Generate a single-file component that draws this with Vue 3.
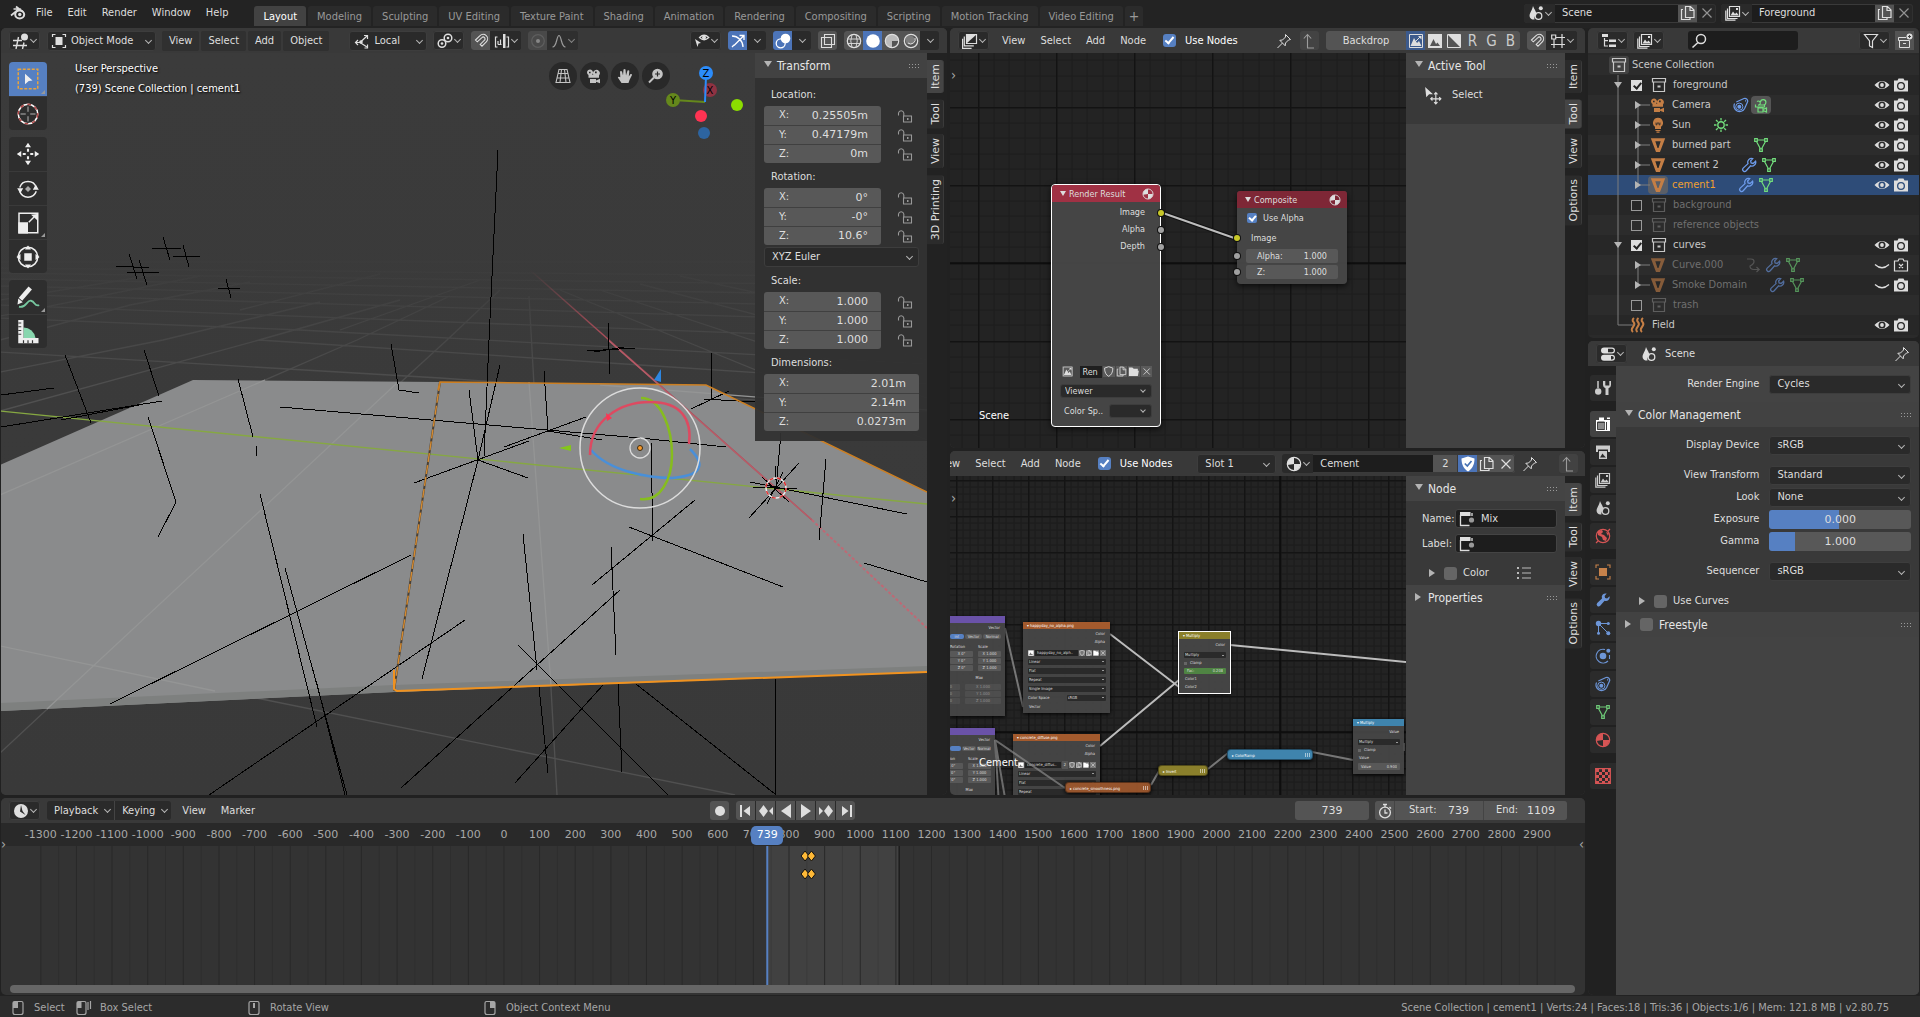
<script setup>
import { h } from 'vue'

const s = (d, w = 1.2, extra = '') => `<path d="${d}" fill="none" stroke="currentColor" stroke-width="${w}" ${extra}/>`
const f = (d, extra = '') => `<path d="${d}" fill="currentColor" ${extra}/>`
const wrench = 'M14.6 4.2a3.8 3.8 0 0 1-5 4.6L5.2 13.800a1.900 1.900 0 0 1-3-2.700L7 6.600a3.800 3.800 0 0 1 4.700-5L9.600 4l.5 2 2 .5z'
const imageStack = s('M4.500 1.500h10v10h-10zM2.500 3.500v10h10M.8 5.500v9.700h9.700') + f('M5.500 10.500l2.500-4 2 2.500 1.500-1.500 2.500 3zM11 3h2v2h-2z')
const mesh = s('M3.500 4.500L7.400 11.800M12.500 4.500L8.600 11.800M4.500 3h7') + s('M1.700 1.700h2.600v2.600H1.700zM11.700 1.700h2.600v2.600h-2.600zM6.700 11.800h2.600v2.600H6.700z', 1.2)
const scene = f('M5 1C6 4 8.500 6.500 8.500 10A4 4 0 0 0 6.500 14.500C2 15 .8 11 2 8.500 3 6 4.500 4 5 1z') + '<circle cx="10.500" cy="11" r="3.300" fill="none" stroke="currentColor" stroke-width="1.300"/><circle cx="12.800" cy="3.200" r="2" fill="currentColor"/>'
const magnet = s('M2.500 7L7 2.700a4.400 4.400 0 0 1 6.300 6.200L9 13.200l-1.800-1.800 4.300-4.200a1.800 1.800 0 0 0-2.600-2.600L4.300 8.800z', 1.100)
const movie = f('M1 4.500a3 3 0 1 1 5 2.200h1.300A3.400 3.400 0 1 1 13 7.500v2.300H2.500V7A3 3 0 0 1 1 4.500zM4 11h6v1.500l4-1.800v4.600l-4-1.500V15H4zM3 3.800v1.400h1.600V3.800zM9 3.500v1.700h1.700V3.500z', 'fill-rule="evenodd"')
const sphere = '<circle cx="8" cy="8" r="6.700" fill="none" stroke="currentColor" stroke-width="1.200"/>'
const constraint = '<circle cx="6.300" cy="9.700" r="2" fill="currentColor"/><circle cx="6.300" cy="9.700" r="3.600" fill="none" stroke="currentColor"/>' + s('M1.600 6.500a5.500 5.500 0 1 0 10 5L14.700 4.500A2.800 2.800 0 0 0 11 1.500L3.300 5M12 3.800h1.200', 1.200)
const photo = f('M1 3.500h3.500L5.500 1.500h5l1 2H15V14.500H1zM8 5a4 4 0 1 0 0 8 4 4 0 0 0 0-8zM8 6.300a2.700 2.700 0 1 1 0 5.400 2.700 2.700 0 0 1 0-5.400z', 'fill-rule="evenodd"')
const icons = {
  blender: s('M1 10.500L9 4H3.500M6 1.500L13 7', 1.700) + '<ellipse cx="9.700" cy="9.500" rx="4.500" ry="4" fill="none" stroke="currentColor" stroke-width="2"/><circle cx="9.800" cy="9.500" r="1.700" fill="currentColor"/>',
  view3d: s('M0 7.500h9M0 12.500h14M5.500 4L3 16M11 9.500L9.500 16', 1.400) + '<circle cx="11.500" cy="4" r="3.500" fill="currentColor"/>',
  objmode: f('M4.500 4h7v8h-7z') + s('M1.500 4V1.500h3M11.500 1.500h3V4M14.500 12v2.500h-3M4.500 14.500h-3V12'),
  orient: s('M6 9.500L13 3M6 9.500l7 4.500M6 9.500H2') + s('M10 2.500h3.500V6M10.500 15h3v-3.500M4 7L1.500 9.500 4 12') + '<circle cx="7" cy="9" r="1.800" fill="currentColor"/>',
  pivot: '<circle cx="5" cy="10.500" r="3.800" fill="none" stroke="currentColor" stroke-width="1.500"/><circle cx="5" cy="10.500" r="1.300" fill="currentColor"/><circle cx="11" cy="5" r="3.800" fill="none" stroke="currentColor" stroke-width="1.500"/><circle cx="11" cy="5" r="1.300" fill="currentColor"/>',
  magnet,
  snapinc: s('M3.500 4h-2v10h2M4 11.500V8M6.500 11.500V6.500M4 11.500h3.500M12.500 4h2v10h-2') + f('M9 1h2.500v14H9z'),
  prop: '<circle cx="8" cy="8" r="6.300" fill="none" stroke="#777" stroke-width="1.200"/><circle cx="8" cy="8" r="2" fill="#bbb"/>',
  falloff: s('M1.500 14C6 14 5.500 2.500 8 2.500S10 14 14.500 14'),
  vis: f('M1 6l6 4-2.500.5L3.500 14z') + s('M5.500 4.500Q10 0 14.800 4.500 10 9 5.500 4.500z') + '<circle cx="10" cy="4.500" r="2" fill="currentColor"/>',
  gizmo: s('M2 3C8 3 13 8 13 14M4 12.500L13.500 3M9.500 2.500h4.500V7M2 14l2-2', 1.300),
  overlay: '<circle cx="10.500" cy="5.500" r="4.800" fill="currentColor"/><circle cx="5.700" cy="10.300" r="4.500" fill="none" stroke="currentColor" stroke-width="1.300"/>',
  xray: s('M4.500 1.500h10v10h-10zM1.500 4.500h10v10h-10z', 1.100),
  wire: sphere + s('M1.500 6h13M1.500 10.500h13M6 1.800q-2.500 6 0 12.500M10 1.800q2.500 6 0 12.500', .9),
  solid: '<circle cx="8" cy="8" r="6.800" fill="currentColor"/>',
  matprev: sphere + f('M8 1.500A6.500 6.500 0 0 0 8 14.500V8h6.500A6.500 6.500 0 0 0 8 1.500z', 'opacity=".75"'),
  rendered: sphere + s('M5 10a4.500 4.500 0 0 0 7-5', 1) + '<circle cx="7" cy="7" r="4.600" fill="currentColor" opacity=".3"/>',
  comp: s('M4.500 1.500h10v9h-10zM2.300 3.500v9.300h9.500M.6 5.800v9.500h9') + f('M4.500 1.500h10L4.500 10.500z'),
  pin: s('M9.500 1.500l5 5-2 .5-3 3-.3 2.800L3.800 7.300 6.500 7l3-3zM6.500 10L1.500 15', 1),
  up: s('M5 15h7M5.500 15V2M1.800 5.500L5.500 1.500l3.700 4', 1.100),
  img1: s('M1.500 1.500h13v13h-13zM3 13L13 3', 1) + f('M2.500 13l3.500-8 3 5 2-2 2.500 5zM10 3h3.500v3.500z'),
  img2: f('M1 1h14v14H1zM3 13h10L10.500 9.500 9 11 6.500 6z', 'fill-rule="evenodd"'),
  diag: s('M1.500 1.500h13v13h-13z', 1) + f('M2 2l12.500 12.500V1.500z'),
  snapgrid: s('M4 6v9M12 1v14M6 4.500h9M1 11.500h14') + s('M1.700 2h4v4h-4z'),
  scene, layers: imageStack,
  copy: s('M5.500 1.500h5L14 5v7.500H5.500zM10 1.500V5.500h4M3 4.500H1.500v10h8.500v-1.500', 1.200),
  x: s('M3.500 3.500l9 9M12.500 3.500l-9 9', 1.200),
  outliner: f('M1 1h6v3H1zM8 6.500h7V9H8zM8 11.500h7V14H8z') + s('M3.500 5v8H7M3.500 7.700H7', 1.200),
  search: '<circle cx="10" cy="6" r="4.500" fill="none" stroke="currentColor" stroke-width="1.500"/>' + s('M7 9.500L1.500 14.500', 1.600),
  filter: s('M1.500 1.500h13L9.500 8v6.500l-3-1.500V8z', 1.200),
  newcoll: s('M9 4.500H1.500v3h11M2.500 7.500v7h10v-7M6 10.500h3', 1) + '<circle cx="12.500" cy="3.500" r="3" fill="currentColor"/><path d="M12.500 2v3M11 3.500h3" stroke="#444"/>',
  coll: s('M1.500 1.500h13v3.500h-13zM2.500 5.500v9h11v-9', 1.200) + f('M6.500 8.500h3v2h-3z'),
  camera: movie,
  camdata: s('M4 4.500a2 2 0 1 1 1 3.500h5A2.700 2.700 0 1 0 7.500 5M2.500 7.500v2.500h9V8M5 11h5v4H5zM10 12.500l3.500-1.500v4L10 13.500', 1.200),
  light: f('M8 .8a5 5 0 0 0-3 9V12h6V9.800a5 5 0 0 0-3-9zM5.500 13h5v1h-5zM6.500 14.500h3v1.200h-3z') + '<path d="M6 5.500v2.300h1V6h2v1.800h1V5.500" stroke="#2c2c2c" fill="none" stroke-width=".8"/>',
  sun: '<circle cx="8" cy="8" r="3.200" fill="none" stroke="currentColor" stroke-width="1.400"/>' + s('M8 1v2.500M8 12.500V15M1 8h2.500M12.500 8H15M3 3l1.800 1.800M11.200 11.200L13 13M3 13l1.800-1.800M11.200 4.800L13 3', 1.300),
  tri: f('M.8 1.200h14.400L10 15H6zM5.300 4.200L7.500 11h1L10.700 4.200z', 'fill-rule="evenodd"'),
  mesh,
  wrenchLine: s(wrench, 1.300),
  wrench: f(wrench),
  constraint,
  curve: s('M2 2h4q3 0 3 2.500T5 9q0 3.500 4 3.500h5M11.500 10l2.700 2.500L11.500 15', 1.200),
  force: s('M4 1Q1.500 3 3.500 5T3 10t0 5M8.500 1Q6 3 8 5t-.5 5 0 5M13 1q-2.500 2-.5 4T12 10t0 5', 2),
  eye: f('M.5 8Q8 0 15.500 8 8 16 .5 8zM8 4.500a3.500 3.500 0 1 0 0 7 3.500 3.500 0 0 0 0-7z', 'fill-rule="evenodd"') + '<circle cx="8" cy="8" r="1.900" fill="currentColor"/>',
  eyeoff: s('M1 7.500Q8 14 15 7.500', 1.200),
  photo,
  photox: s('M1.500 4H5l1-2h4l1 2h3.500v10h-13zM6 7l4 4M10 7l-4 4', 1.200),
  lock: s('M6.500 8h8v6h-8zM1.500 7.500V5a2.700 2.700 0 0 1 5.300 0v3', 1.100) + f('M10 10h1.500v2H10z'),
  shield: f('M8 .5l6.500 2C14.500 9 12 13 8 15.500 4 13 1.500 9 1.500 2.500z') + '<path d="M4.800 7.500L7.300 10 11.500 5" stroke="#4772b3" stroke-width="1.700" fill="none"/>',
  shieldo: s('M8 1l6 2C14 9 12 13 8 15 4 13 2 9 2 3z', 1.300),
  folder: f('M1 2h5l2 2h6v3h1.500L14 14.500H1z'),
  material: sphere + f('M8 1.500A6.500 6.500 0 0 0 1.500 9L8 8zM8 8v6.500A6.500 6.500 0 0 0 14.500 8z'),
  node: s('M1.500 4v10.500h9M13 5V2', 1.300) + f('M1 1h10.500v4H1z') + '<circle cx="12.500" cy="9" r="2.600" fill="#999"/>',
  list: s('M6 3h9M6 8h9M6 13h9', 1.200) + f('M1 2h2v2H1zM1 7h2v2H1zM1 12h2v2H1z'),
  clock: f('M8 1a7 7 0 1 0 0 14A7 7 0 0 0 8 1zM8 2l1.500 6 3 4L7 8.500z', 'fill-rule="evenodd"'),
  mouseL: s('M3 3q0-1.500 1.500-1.500h7Q13 1.500 13 3v9.500q0 2-2 2H5q-2 0-2-2z', 1.200) + f('M3 2h5v6H3z'),
  mouseD: s('M1 3q0-1.500 1.500-1.500h6Q10 1.500 10 3v9.500q0 2-2 2H3q-2 0-2-2zM12 2v8M14.500 1v8', 1.200) + f('M1 2h4.500v6H1z'),
  mouseM: s('M3 3q0-1.500 1.500-1.500h7Q13 1.500 13 3v9.500q0 2-2 2H5q-2 0-2-2z', 1.200) + f('M7 3h2v5H7z'),
  mouseR: s('M3 3q0-1.500 1.500-1.500h7Q13 1.500 13 3v9.500q0 2-2 2H5q-2 0-2-2z', 1.200) + f('M8 2h5v6H8z'),
  stopwatch: '<circle cx="8" cy="9.500" r="5.400" fill="none" stroke="currentColor" stroke-width="1.300"/>' + s('M8 6.500v3.500h2.500M6 1.500h4M8 1.500V4M12.500 4l1.500 1.500', 1.300),
  editor: f('M4 1.500h8a3 3 0 0 1 0 6H4a3 3 0 0 1 0-6zM8 2.700v3.600h4a1.800 1.800 0 0 0 0-3.600zM4 8.700h8a3 3 0 0 1 0 6H4a3 3 0 0 1 0-6zM11 9.900v3.600h1a1.800 1.800 0 0 0 0-3.600z', 'fill-rule="evenodd"'),
  tools: s('M3 1v7', 1.500) + '<circle cx="3.200" cy="11.500" r="3.200" fill="currentColor"/>' + f('M8 1v4a3.500 3.500 0 0 0 2.500 3.300V15h3V8.300A3.500 3.500 0 0 0 16 5V1h-1.700v4.500h-4V1z'),
  render: f('M1 4h3V1.500h5V4h6v11H1zM12 1.500h3V3h-3z') + '<path d="M2.500 6h7v7.500h-7zM11.500 6v8" fill="#3d3d3d" stroke="#3d3d3d"/><path d="M3 8h6.500M3 10h6.500M3 12h6.500" stroke="currentColor" stroke-width=".8"/>',
  output: f('M1 1.500h14V8h-2V5.500H3V8H1zM4 7h8v8H4z') + '<path d="M5 13.500l2.500-4 1.500 2 2 2z" fill="#2b2b2b"/>',
  world: sphere + f('M3 3l4-1 1 2-2 2 3 1 3 3-1 3-3-1-1-3-4-2zM11 4l3 1-1 3z') + s('M1 15l2-2M15 1l-2 2'),
  object: f('M4 4h8v8H4z') + s('M1 4V1h3M12 1h3v3M15 12v3h-3M4 15H1v-3', 1.100),
  particles: '<circle cx="3.500" cy="3.500" r="2.700" fill="currentColor"/><circle cx="13.300" cy="3.500" r="1.500" fill="currentColor"/><circle cx="3.500" cy="13.300" r="1.500" fill="currentColor"/><circle cx="13.300" cy="13.300" r="2" fill="currentColor"/>' + s('M5 3.500h7M3.500 5v7M5 5l7 7', 1),
  physics: '<circle cx="8" cy="8" r="3.300" fill="currentColor"/><circle cx="13.300" cy="2.800" r="2" fill="currentColor"/>' + s('M10 1.500A6.900 6.900 0 1 0 13 13M14.500 7v4', 1.100),
  texture: s('M.7.700h14.600v14.600H.7z', 1.300) + f('M1 1h3v3H1zM7 1h3v3H7zM4 4h3v3H4zM10 4h3v3h-3zM1 7h3v3H1zM7 7h3v3H7zM13 7h2v3h-2zM4 10h3v3H4zM10 10h3v3h-3zM1 13h3v2H1zM7 13h3v2H7zM13 1h2v3h-2zM13 13h2v2h-2z'),
  persp: s('M4 1.500h8L15 14.500H1zM3 5.500h10M2 10h12M6.500 1.500L5 14.500M9.500 1.500L11 14.500', 1.100),
  hand: f('M4.500 15L.8 9.500Q1.500 8 3.300 9.300L3 3.500Q4 2.300 5 3.500L6 7.500 6.500 1.500Q7.600.300 8.500 1.500L9 7.500l1.500-5Q12 1.700 12.300 3L11.800 8.500 13.500 6Q15 5.500 15 7L12.500 12 11.500 15z'),
  zoom: '<circle cx="9.500" cy="6" r="5.300" fill="currentColor"/><path d="M9.500 3.500v5M7 6h5" stroke="#2b2b2b" stroke-width="1.200"/>' + s('M6 9.500L1 14.500', 2),
  select: '<path d="M1.500 1.500h13v13h-13z" fill="none" stroke="#e8a33d" stroke-width="1" stroke-dasharray="2 1"/>' + f('M6 4.500l5 4.500-2.500.3L6 11.500z'),
  cursor: '<circle cx="8" cy="8" r="6.500" fill="none" stroke="#fff" stroke-width="1"/><circle cx="8" cy="8" r="6.500" fill="none" stroke="#b04848" stroke-width="1" stroke-dasharray="2.500 2.500"/><path d="M8 3v3.500M8 9.500V13M3 8h3.500M9.500 8H13" stroke="#888"/>',
  move: f('M8 .5l2 3H6zM8 15.500l2-3H6zM.5 8l3-2v4zM15.500 8l-3-2v4z') + s('M8 4.500v2M8 9.500v2M4.500 8h2M9.500 8h2', 1.400),
  rotate: s('M2.500 7a5.800 5.800 0 0 1 11 0M13.500 9.500a5.800 5.800 0 0 1-11 0', 1) + f('M.8 7.500h4L2.800 11zM15.200 8.500h-4L13.200 5z') + '<path d="M8 6l2 2-2 2-2-2z" fill="#aaa"/>',
  scale: s('M2 1.500h12.500v13H2z', 1) + f('M1.500 7.500h6.500V15H1.500zM14 2v4L10 2.500z') + s('M8.500 7.500L12 4', 1),
  transform: '<circle cx="8" cy="8" r="6.500" fill="none" stroke="currentColor"/>' + f('M5.500 5.500h5v5h-5zM8 .3l2 2.700H6zM8 15.700L6 13h4zM.3 8L3 6v4zM15.700 8L13 10V6z'),
  annotate: s('M9.500 2L3 9.500', 3) + f('M1.500 9l3 2.500L1 13z') + '<path d="M2 14.500c5 1 5-4.500 8-4s2 4 5.500 3" fill="none" stroke="#77c8a0" stroke-width="1.200"/>',
  measure: '<path d="M5 5a8 8 0 0 1 8 7H5z" fill="#88d6ae"/>' + f('M1.500 0h3.500v12h10v3.500H1.500z') + '<path d="M1.500 2h2M1.500 4.500h2M1.500 7h2M1.500 9.500h2M5 15.500v-2M8 15.500v-2M11 15.500v-2" stroke="#333" stroke-width=".8"/>',
  seltool: f('M1 0l7 6.500H4.500L2 9z') + s('M10.500 5v10M6 10.500h9M9 6.500l1.500-1.500L12 6.500M9 13.500l1.500 1.500 1.500-1.500M7.500 9L6 10.500 7.500 12M13.500 9l1.500 1.500-1.500 1.500', 1),
  first: f('M2 2h2v12H2zM12 3v10L5.500 8z'),
  prevk: f('M5.500 2l4.500 6-4.500 6L1 8zM15 4v8l-4-4z'),
  prev: f('M13 1v14L3 8z'),
  play: f('M3 1v14l10-7z'),
  nextk: f('M10.500 2L15 8l-4.500 6L6 8zM1 4v8l4-4z'),
  last: f('M12 2h2v12h-2zM4 3v10l6.500-5z'),
  rec: '<circle cx="8" cy="8" r="5" fill="currentColor"/>',
}
const Icon = (p) => h('svg', { viewBox: '0 0 16 16', class: 'ic', 'aria-hidden': 'true', innerHTML: icons[p.n] })
Icon.props = ['n']

const menus = ['File', 'Edit', 'Render', 'Window', 'Help']
const workspaces = ['Layout', 'Modeling', 'Sculpting', 'UV Editing', 'Texture Paint', 'Shading', 'Animation', 'Rendering', 'Compositing', 'Scripting', 'Motion Tracking', 'Video Editing', '+']
const tools = [['select', 'cursor'], ['move', 'rotate', 'scale', 'transform'], ['annotate', 'measure']]
const transform = [
  ['Location:', ['0.25505m', '0.47179m', '0m'], true],
  ['Rotation:', ['0°', '-0°', '10.6°'], true],
  ['Scale:', ['1.000', '1.000', '1.000'], true],
  ['Dimensions:', ['2.01m', '2.14m', '0.0273m'], false],
]
const outliner = [
  { d: 1, t: 'foreground', open: 1, cb: 1, ic: 'coll', v: ['eye', 'photo'] },
  { d: 2, t: 'Camera', ic: 'camera', x: [['constraint', 'blue'], ['camdata', 'green lit']], v: ['eye', 'photo'] },
  { d: 2, t: 'Sun', ic: 'light', x: [['sun', 'green']], v: ['eye', 'photo'] },
  { d: 2, t: 'burned part', ic: 'tri', x: [['mesh', 'green']], v: ['eye', 'photo'] },
  { d: 2, t: 'cement 2', ic: 'tri', x: [['wrenchLine', 'blue'], ['mesh', 'green']], v: ['eye', 'photo'] },
  { d: 2, t: 'cement1', ic: 'tri', sel: 1, x: [['wrenchLine', 'blue'], ['mesh', 'green']], v: ['eye', 'photo'] },
  { d: 1, t: 'background', cb: 1, off: 1, ic: 'coll', v: [] },
  { d: 1, t: 'reference objects', cb: 1, off: 1, ic: 'coll', v: [] },
  { d: 1, t: 'curves', open: 1, cb: 1, ic: 'coll', v: ['eye', 'photo'] },
  { d: 2, t: 'Curve.000', off: 1, ic: 'tri', x: [['curve', ''], ['wrenchLine', 'blue'], ['mesh', 'green']], v: ['eyeoff', 'photox'] },
  { d: 2, t: 'Smoke Domain', off: 1, ic: 'tri', x: [['wrenchLine', 'blue'], ['mesh', 'green']], v: ['eyeoff', 'photo'] },
  { d: 1, t: 'trash', cb: 1, off: 1, ic: 'coll', v: [] },
  { d: 1, t: 'Field', leaf: 1, ic: 'force', v: ['eye', 'photo'] },
]
const propTabs = [
  [['tools', '']],
  [['render', 'on'], ['output', ''], ['layers', ''], ['scene', ''], ['world', 'red']],
  [['object', 'orange'], ['wrench', 'pblue'], ['particles', 'pblue'], ['physics', 'pblue'], ['constraint', 'pblue'], ['mesh', 'green'], ['material', 'red']],
  [['texture', 'red']],
]
const frames = Array.from({ length: 43 }, (_, i) => (i - 13) * 100)
const pos = (v) => (((v + 1300) / 100 + 0.5) / 43) * 100 + '%'

const wires = [
  'M65 355L91 423M144 350L159 396M1 395L54 388M1 427L162 401M61 420L139 405M148 417L176 502L158 537M238 379L253 437M256 446V456M391 344L399 390L419 393',
  'M280 407L640 438L726 447M544 371L548 431M586 417L504 447M548 431L602 440M469 390L478 460M498 150L489 340L484 457M500 365L478 460L422 679M414 483L529 441M478 460L528 478',
  'M260 494L317 727M285 568L347 795M317 684L345 795M411 555L110 704M465 620L209 795M523 534L537 670M518 645L668 795M620 590L401 788M611 547L616 655M592 585L695 500M629 527L783 587M651 442L653 541',
  'M608 323L610 374M587 351L635 348M594 352L624 347M712 353L711 400M704 399L755 402M691 409L729 391M781 433L776 488M826 459L819 540M750 482L907 514M753 487L797 489M799 463L749 518M783 472L767 504M762 477L789 502M775 466V480M864 563L927 582',
  'M539 687L548 773M603 685L515 783M618 684L622 772M636 684L775 794V679M163 237L170 260M152 248L181 249M183 245L189 267M173 256H200M129 254L137 279M139 260L147 285M116 266L149 268M127 272L159 273M226 279L231 298M218 288H240',
].join('')
const nearGrid = 'M529 296L557 795M0 646L735 795M0 753L261 510L447 340L500 290M0 495L357 340L450 296M0 411L259 340L400 300M0 372L163 340L320 302M0 352L440 378L927 412M259 340L640 365L927 384M0 340L130 305L250 282M0 318L300 330L927 364M0 305L927 340M560 290L927 440M600 290L927 398'
const farGrid = 'M0 294L927 322M0 286L927 308M0 279L927 296M0 273L927 286M0 268L927 277M0 316L200 276M0 300L160 274M340 330L480 280M240 310L380 274M640 284L927 360M680 276L927 330M0 262H927'

const imgRows = (name, users) => [
  { k: 'out', l: 'Color' }, { k: 'out', l: 'Alpha', gap: 1 }, { k: 'img', l: name, u: users },
  { k: 'sel', l: 'Linear' }, { k: 'sel', l: 'Flat' }, { k: 'sel', l: 'Repeat' }, { k: 'sel', l: 'Single Image' },
  { k: 'cs', l: 'Color Space', v: 'sRGB' }, { k: 'in', l: 'Vector' },
]
const shaderNodes = [
  { x: 73, y: 146, w: 87, h: 91, c: 'tex', t: 'happyday_no_alpha.png', rows: imgRows('happyday_no_alph..', '') },
  { x: 63, y: 258, w: 87, h: 91, c: 'tex', t: 'concrete_diffuse.png', rows: imgRows('concrete_diffus..', '2') },
  { x: 229, y: 156, w: 51, h: 61, c: 'mix', t: 'Multiply', sel: 1, rows: [{ k: 'out', l: 'Color', gap: 1 }, { k: 'sel', l: 'Multiply' }, { k: 'cb', l: 'Clamp' }, { k: 'fac', l: 'Fac:', v: '0.208' }, { k: 'in', l: 'Color1' }, { k: 'in', l: 'Color2' }] },
  { x: 403, y: 243, w: 51, h: 55, c: 'conv', t: 'Multiply', rows: [{ k: 'out', l: 'Value', gap: 1 }, { k: 'sel', l: 'Multiply' }, { k: 'cb', l: 'Clamp' }, { k: 'in', l: 'Value' }, { k: 'val', l: 'Value', v: '0.900' }] },
]
const mappings = [{ x: 0, y: 140, w: 55, a: 'int' }, { x: 0, y: 252, w: 45, a: '' }]
const pills = [
  { x: 115, y: 306, w: 86, c: 'tex', t: 'concrete_smoothness.png' },
  { x: 208, y: 289, w: 50, c: 'mix', t: 'Invert' },
  { x: 277, y: 273, w: 86, c: 'conv', t: 'ColorRamp' },
]
</script>

<template>
  <div class="app">
    <header class="topbar">
      <Icon n="blender" class="logo" />
      <nav class="menus"><button v-for="m in menus" :key="m">{{ m }}</button></nav>
      <nav class="spaces"><button v-for="(w, i) in workspaces" :key="w" :class="{ on: i === 0, plus: w === '+' }">{{ w }}</button></nav>
      <div class="idblock">
        <button class="ibtn drop" aria-label="Browse scene"><Icon n="scene" /></button>
        <input value="Scene" aria-label="Scene name" />
        <button class="sq" aria-label="New scene"><Icon n="copy" /></button>
        <button class="sq dim dark" aria-label="Remove scene"><Icon n="x" /></button>
      </div>
      <div class="idblock">
        <button class="ibtn drop" aria-label="Browse view layer"><Icon n="layers" /></button>
        <input value="Foreground" aria-label="View layer name" />
        <button class="sq" aria-label="New view layer"><Icon n="copy" /></button>
        <button class="sq dim dark" aria-label="Remove view layer"><Icon n="x" /></button>
      </div>
    </header>

    <main class="main">
      <div class="left">
        <div class="upper">
          <section class="area view3d">
            <div class="hdr">
              <button class="ibtn drop solo" aria-label="Editor type"><Icon n="view3d" /></button>
              <label class="dd mode"><Icon n="objmode" /><select aria-label="Mode"><option>Object Mode</option></select></label>
              <div class="mbtns"><button v-for="m in ['View', 'Select', 'Add', 'Object']" :key="m">{{ m }}</button></div>
              <label class="dd local"><Icon n="orient" /><select aria-label="Orientation"><option>Local</option></select></label>
              <button class="ibtn drop solo" aria-label="Pivot"><Icon n="pivot" /></button>
              <div class="grp"><button class="sq" aria-label="Snap"><Icon n="magnet" /></button><button class="ibtn drop" aria-label="Snap to"><Icon n="snapinc" /></button></div>
              <div class="grp dim"><button class="sq" aria-label="Proportional"><Icon n="prop" /></button><button class="ibtn drop" aria-label="Falloff"><Icon n="falloff" /></button></div>
              <button class="ibtn drop solo push" aria-label="Visibility"><Icon n="vis" /></button>
              <div class="grp"><button class="sq blue" aria-label="Gizmos"><Icon n="gizmo" /></button><button class="chev" aria-label="Gizmo options"></button></div>
              <div class="grp"><button class="sq blue" aria-label="Overlays"><Icon n="overlay" /></button><button class="chev" aria-label="Overlay options"></button></div>
              <div class="grp"><button class="sq" aria-label="X-ray"><Icon n="xray" /></button></div>
              <div class="grp"><button class="sq" aria-label="Wireframe"><Icon n="wire" /></button><button class="sq blue" aria-label="Solid"><Icon n="solid" /></button><button class="sq" aria-label="Material preview"><Icon n="matprev" /></button><button class="sq" aria-label="Rendered"><Icon n="rendered" /></button><button class="chev" aria-label="Shading options"></button></div>
            </div>
            <div class="body">
              <div class="canvas">
                <svg class="fill" viewBox="1 53 926 742" preserveAspectRatio="xMinYMin slice">
                  <defs>
                    <linearGradient id="sky" x1="0" y1="0" x2="0" y2="1"><stop offset="0" stop-color="#3b3b3b" /><stop offset="1" stop-color="#393939" /></linearGradient>
                    <linearGradient id="fade" gradientUnits="userSpaceOnUse" x1="0" y1="255" x2="0" y2="400"><stop offset="0" stop-color="#555" stop-opacity="0" /><stop offset="1" stop-color="#565656" stop-opacity=".8" /></linearGradient>
                    <linearGradient id="redfade" gradientUnits="userSpaceOnUse" x1="530" y1="270" x2="600" y2="335"><stop offset="0" stop-color="#a84c58" stop-opacity="0" /><stop offset="1" stop-color="#a84c58" /></linearGradient>
                  </defs>
                  <rect y="53" width="930" height="742" fill="url(#sky)" />
                  <path :d="nearGrid + farGrid" stroke="url(#fade)" stroke-width="1.300" fill="none" />
                  <path d="M0 465L193 380L440 382L706 385L927 492V672L394 692L0 711z" fill="#8a8b8c" />
                  <path d="M0 703L394 685L927 666V672L394 692L0 711z" fill="#7e807f" />
                  <path d="M529 382L551 686M0 646L215 691M47 709L261 510L398 382M0 495L265 380M600 385L927 410" stroke="#949595" stroke-width="1.300" fill="none" />
                  <path d="M0 411L927 504" stroke="#86a842" stroke-width="1.400" />
                  <path d="M530 270L812 520" stroke="url(#redfade)" stroke-width="1.400" />
                  <path d="M608 340L812 520" stroke="#b95d69" stroke-width="1.200" />
                  <path d="M812 520L927 628" stroke="#c06874" stroke-width="2" stroke-dasharray="3 2" />
                  <path :d="wires" stroke="#000" stroke-width="1" fill="none" shape-rendering="crispEdges" />
                  <path d="M440 382L394 691" stroke="#4b4033" stroke-width="2" fill="none" />
                  <path d="M440 382L394 691" stroke="#d58b31" stroke-width="1.400" stroke-dasharray="9 3" fill="none" />
                  <path d="M394 670V689L397 691L927 672" stroke="#f0921f" stroke-width="2" fill="none" />
                  <path d="M438 390L440 382L706 385L927 492" stroke="#cc7f22" stroke-width="1.500" fill="none" />
                  <g fill="none" stroke-width="2.500">
                    <path d="M591 450C610 472 650 478 672 478C697 476 709 468 690 449" stroke="#4a8fd8" />
                    <path d="M641 398C662 398 672 430 672 455C672 480 660 502 640 499" stroke="#86bd1e" />
                    <path d="M590 455C590 420 620 402 650 402C682 402 692 420 689 444" stroke="#dd4a61" />
                    <circle cx="640" cy="448" r="60" stroke="#dcdcdc" stroke-width="1.500" />
                    <circle cx="640" cy="448" r="10" stroke="#dcdcdc" stroke-width="1.300" />
                    <circle cx="776" cy="488" r="10" stroke="#eee" stroke-width="1.400" />
                    <circle cx="776" cy="488" r="10" stroke="#e02828" stroke-width="1.400" stroke-dasharray="4 4" />
                  </g>
                  <circle cx="640" cy="448" r="2.500" fill="#f99a2b" stroke="#3a2a10" />
                  <path d="M559 448L571 445V451z" fill="#84c61a" /><path d="M654 380L661 369V382z" fill="#2d86e0" /><path d="M606 413L612 418L607 421z" fill="#ff3352" />
                </svg>
                <p class="viewinfo">User Perspective<br />(739) Scene Collection | cement1</p>
                <div class="toolbar">
                  <div v-for="(g, gi) in tools" :key="gi" class="tgroup">
                    <button v-for="t in g" :key="t" :class="{ on: t === 'select', more: ['select', 'scale', 'annotate'].includes(t) }" :aria-label="t"><Icon :n="t" /></button>
                  </div>
                </div>
                <div class="navs"><button v-for="n in ['persp', 'camera', 'hand', 'zoom']" :key="n" :aria-label="n"><Icon :n="n" /></button></div>
                <svg class="axes" viewBox="664 62 84 80">
                  <circle cx="710" cy="90" r="7" fill="#8f3242" /><text x="710" y="94">X</text>
                  <path d="M705 102L673 100" stroke="#65881c" stroke-width="2" /><circle cx="673" cy="100" r="7" fill="#65881c" /><text x="673" y="104">Y</text>
                  <path d="M705 102L706 76" stroke="#2b8cfb" stroke-width="2" /><circle cx="706" cy="73" r="7" fill="#2b8cfb" /><text x="706" y="77">Z</text>
                  <circle cx="737" cy="105" r="6" fill="#8bdc00" /><circle cx="701" cy="116" r="6" fill="#ff3352" /><circle cx="704" cy="133" r="6" fill="#2d64a0" />
                </svg>
                <aside class="npanel">
                  <h2 class="ph open">Transform<i class="grip"></i></h2>
                  <div v-for="(g, gi) in transform" :key="g[0]" class="tg">
                    <h3>{{ g[0] }}</h3>
                    <div class="tgrow">
                      <div class="nums"><label v-for="(v, i) in g[1]" :key="i"><span>{{ 'XYZ'[i] }}:</span><input :value="v" /></label></div>
                      <div v-if="g[2]" class="locks"><button v-for="i in 3" :key="i" aria-label="Lock"><Icon n="lock" /></button></div>
                    </div>
                    <label v-if="gi === 1" class="dd euler"><select aria-label="Rotation mode"><option>XYZ Euler</option></select></label>
                  </div>
                </aside>
              </div>
              <nav class="vtabs"><button v-for="(t, i) in ['Item', 'Tool', 'View', '3D Printing']" :key="t" :class="{ on: i === 0 }">{{ t }}</button></nav>
            </div>
          </section>

          <div class="mid">
            <section class="area comp">
              <div class="hdr">
                <button class="ibtn drop solo" aria-label="Editor type"><Icon n="comp" /></button>
                <div class="plain"><button v-for="m in ['View', 'Select', 'Add', 'Node']" :key="m">{{ m }}</button></div>
                <label class="check"><input type="checkbox" checked />Use Nodes</label>
                <button class="bare push" aria-label="Pin"><Icon n="pin" /></button>
                <button class="sq dim faint" aria-label="Parent"><Icon n="up" /></button>
                <div class="grp"><button class="txt">Backdrop</button><button class="sq navy" aria-label="Color and alpha"><Icon n="img1" /></button><button class="sq" aria-label="Color"><Icon n="img2" /></button><button class="sq" aria-label="Alpha"><Icon n="diag" /></button><button v-for="c in 'RGB'" :key="c" class="sq rgb">{{ c }}</button></div>
                <div class="grp end"><button class="sq" aria-label="Snap"><Icon n="magnet" /></button><button class="ibtn drop" aria-label="Snap to"><Icon n="snapgrid" /></button></div>
              </div>
              <div class="body">
                <div class="canvas nodes">
                  <svg class="fill">
                    <defs><pattern id="g1" x="28" y="54" width="78" height="78" patternUnits="userSpaceOnUse"><path d="M16 0V78M31 0V78M47 0V78M62 0V78M0 16H78M0 31H78M0 47H78M0 62H78" stroke="#1b1b1b" /><path d="M0 0V78M0 0H78" stroke="#131313" stroke-width="3" /></pattern></defs>
                    <rect width="100%" height="100%" fill="url(#g1)" /><path d="M0 210H700" stroke="#0e0e0e" stroke-width="1.500" />
                    <path d="M210 159L287 186" stroke="#111" stroke-width="4" /><path d="M210 159L287 186" stroke="#bdbdbd" stroke-width="2" />
                  </svg>
                  <span class="expand">›</span>
                  <article class="node rr">
                    <h4>Render Result<Icon n="material" /></h4>
                    <p class="sock yl">Image</p><p class="sock">Alpha</p><p class="sock">Depth</p>
                    <div class="nimg"><Icon n="img1" /><input value="Ren" aria-label="Image name" /><Icon n="shieldo" /><Icon n="copy" /><Icon n="folder" /><Icon n="x" /></div>
                    <label class="dd nsel"><select aria-label="Layer"><option>Viewer</option></select></label>
                    <label class="nline">Color Sp.. <span class="dd"><select><option></option></select></span></label>
                  </article>
                  <article class="node cp">
                    <h4>Composite<Icon n="material" /></h4>
                    <label class="check"><input type="checkbox" checked />Use Alpha</label>
                    <p class="sock in yl">Image</p>
                    <label class="nval">Alpha:<input value="1.000" /></label>
                    <label class="nval">Z:<input value="1.000" /></label>
                  </article>
                  <span class="treename">Scene</span>
                </div>
                <aside class="side">
                  <h2 class="ph open">Active Tool<i class="grip"></i></h2>
                  <div class="pbody atool"><Icon n="seltool" />Select</div>
                </aside>
                <nav class="vtabs"><button v-for="(t, i) in ['Item', 'Tool', 'View', 'Options']" :key="t" :class="{ on: i === 1 }">{{ t }}</button></nav>
              </div>
            </section>

            <section class="area shader">
              <div class="hdr">
                <div class="plain"><button v-for="m in ['ew', 'Select', 'Add', 'Node']" :key="m">{{ m }}</button></div>
                <label class="check"><input type="checkbox" checked />Use Nodes</label>
                <label class="dd slot"><select aria-label="Slot"><option>Slot 1</option></select></label>
                <div class="idblock">
                  <button class="ibtn drop" aria-label="Browse material"><Icon n="material" /></button>
                  <input value="Cement" aria-label="Material name" />
                  <button class="sq two">2</button><button class="sq blue" aria-label="Fake user"><Icon n="shield" /></button><button class="sq" aria-label="New"><Icon n="copy" /></button><button class="sq" aria-label="Unlink"><Icon n="x" /></button>
                </div>
                <button class="bare" aria-label="Pin"><Icon n="pin" /></button>
                <button class="sq dim faint last" aria-label="Parent"><Icon n="up" /></button>
              </div>
              <div class="body">
                <div class="canvas nodes">
                  <svg class="fill">
                    <defs><pattern id="g2" x="6" y="4" width="36" height="36" patternUnits="userSpaceOnUse"><path d="M7 0V36M14 0V36M22 0V36M29 0V36M0 7H36M0 14H36M0 22H36M0 29H36" stroke="#1a1a1a" /><path d="M0 0V36M0 0H36" stroke="#141414" stroke-width="3" /></pattern></defs>
                    <rect width="100%" height="100%" fill="url(#g2)" /><path d="M0 256H700M330 0V400" stroke="#0d0d0d" stroke-width="1.500" />
                    <g stroke="#777" stroke-width="2"><path d="M55 152L73 231M201 309L209 295M258 293L278 277M362 276L403 284M454 267V275" /></g>
                    <g stroke="#bcbcbc" stroke-width="2"><path d="M160 158L229 211M150 270L229 204M280 169L456 186" /></g>
                  </svg>
                  <article v-for="m in mappings" :key="m.y" class="tiny mapn" :style="{ left: m.x + 'px', top: m.y + 'px', width: m.w + 'px' }">
                    <h4 class="vec"></h4>
                    <p class="out">Vector</p>
                    <div class="seg"><button class="on">{{ m.a }}</button><button>Vector</button><button>Normal</button></div>
                    <div class="lab"><span>Rotation</span><span>Scale</span></div>
                    <div v-for="a in 'XYZ'" :key="a" class="pair"><span>{{ a }} 0°</span><span>{{ a }} 1.000</span></div>
                    <label class="tcb"><input type="checkbox" />Max</label>
                    <div v-for="a in 'XYZ'" :key="'m' + a" class="pair off"><span>000</span><span>{{ a }} 1.000</span></div>
                  </article>
                  <article v-for="n in shaderNodes" :key="n.x" class="tiny" :class="{ sel: n.sel, short: !n.c.startsWith('tex') }" :style="{ left: n.x + 'px', top: n.y + 'px', width: n.w + 'px', height: n.h + 'px' }">
                    <h4 :class="n.c">▾ {{ n.t }}</h4>
                    <template v-for="(r, i) in n.rows" :key="i">
                      <p v-if="r.k === 'out'" class="out" :class="{ gap: r.gap }">{{ r.l }}</p>
                      <p v-else-if="r.k === 'in'" class="inp">{{ r.l }}</p>
                      <label v-else-if="r.k === 'cb'" class="tcb"><input type="checkbox" />{{ r.l }}</label>
                      <div v-else-if="r.k === 'img'" class="timg"><Icon n="img2" /><input :value="r.l" aria-label="Image" /><b v-if="r.u">{{ r.u }}</b><Icon n="shieldo" /><Icon n="copy" /><Icon n="folder" /><Icon n="x" /></div>
                      <label v-else-if="r.k === 'fac' || r.k === 'val'" class="tval" :class="r.k">{{ r.l }}<input :value="r.v" /></label>
                      <label v-else class="tsel" :class="r.k"><span v-if="r.k === 'cs'">{{ r.l }}</span><select :aria-label="r.l"><option>{{ r.v || r.l }}</option></select></label>
                    </template>
                  </article>
                  <svg class="fill over"><path d="M45 264L115 312M45 264L50 345M45 264L59 345" stroke="#8a8a8a" stroke-opacity=".7" stroke-width="2" /></svg>
                  <div v-for="p in pills" :key="p.x" class="pill" :class="p.c" :style="{ left: p.x + 'px', top: p.y + 'px', width: p.w + 'px' }">▸ {{ p.t }}<i></i></div>
                  <span class="expand">›</span>
                  <span class="treename">Cement</span>
                </div>
                <aside class="side">
                  <h2 class="ph open">Node<i class="grip"></i></h2>
                  <div class="pbody nprops">
                    <label>Name:<span class="tf"><Icon n="node" /><input value="Mix" /></span></label>
                    <label>Label:<span class="tf"><Icon n="node" /><input value="" /></span></label>
                    <div class="sub"><i class="arr"></i><label class="check"><input type="checkbox" />Color</label><button class="bare" aria-label="Presets"><Icon n="list" /></button></div>
                  </div>
                  <h2 class="ph">Properties<i class="grip"></i></h2>
                </aside>
                <nav class="vtabs"><button v-for="(t, i) in ['Item', 'Tool', 'View', 'Options']" :key="t" :class="{ on: i === 0 }">{{ t }}</button></nav>
              </div>
            </section>
          </div>
        </div>

        <section class="area timeline">
          <div class="hdr">
            <button class="ibtn drop solo" aria-label="Editor type"><Icon n="clock" /></button>
            <div class="grp tmenus"><button class="drop">Playback</button><button class="drop">Keying</button></div>
            <div class="plain"><button>View</button><button>Marker</button></div>
            <div class="transport">
              <div class="grp"><button class="sq" aria-label="Record"><Icon n="rec" /></button></div>
              <div class="grp"><button v-for="b in ['first', 'prevk', 'prev', 'play', 'nextk', 'last']" :key="b" class="sq" :aria-label="b"><Icon :n="b" /></button></div>
            </div>
            <input class="cur" value="739" aria-label="Current frame" />
            <div class="grp range"><button class="sq" aria-label="Preview range"><Icon n="stopwatch" /></button><label>Start:<input value="739" /></label><label>End:<input value="1109" /></label></div>
          </div>
          <div class="ruler"><div class="scale"><span v-for="n in frames" :key="n">{{ n }}</span><b class="now" :style="{ left: pos(739) }">739</b></div></div>
          <div class="track">
            <svg class="fill">
              <rect :x="pos(739)" y="0" width="8.600%" height="100%" fill="#414141" />
              <line v-for="n in frames" :key="n" :x1="pos(n)" :x2="pos(n)" y1="0" y2="100%" stroke="#292929" />
              <line v-for="n in frames" :key="'h' + n" :x1="pos(n + 50)" :x2="pos(n + 50)" y1="0" y2="100%" stroke="#000" stroke-opacity=".1" />
              <line :x1="pos(1109)" :x2="pos(1109)" y1="0" y2="100%" stroke="#111" />
              <line :x1="pos(739)" :x2="pos(739)" y1="0" y2="100%" stroke="#5680c2" stroke-width="2" />
              <svg v-for="k in [[845, 10], [863, 10], [845, 28], [863, 28]]" :key="k.join()" :x="pos(k[0])" :y="k[1]" overflow="visible"><path d="M0 -5L4 0L0 5L-4 0z" fill="#ffb937" stroke="#111" stroke-width="1" /></svg>
            </svg>
          </div>
          <div class="scroll"></div>
          <span class="expand">›</span><span class="expand r">‹</span>
        </section>
      </div>

      <div class="right">
        <section class="area outl">
          <div class="hdr">
            <button class="ibtn drop solo" aria-label="Editor type"><Icon n="outliner" /></button>
            <button class="ibtn drop solo" aria-label="Display mode"><Icon n="layers" /></button>
            <label class="search"><Icon n="search" /><input aria-label="Filter" /></label>
            <button class="ibtn drop solo" aria-label="Filters"><Icon n="filter" /></button>
            <button class="sq" aria-label="New collection"><Icon n="newcoll" /></button>
          </div>
          <ul class="tree">
            <li class="root"><span class="hl"><Icon n="coll" /></span>Scene Collection</li>
            <li v-for="o in outliner" :key="o.t" :class="['d' + o.d, { sel: o.sel, off: o.off }]">
              <i class="arr" :class="{ open: o.open, none: (o.cb && !o.open) || o.leaf }"></i>
              <input v-if="o.cb" type="checkbox" class="ocb" :checked="!o.off" :aria-label="o.t" />
              <span class="oi" :class="{ org: o.ic !== 'coll', lit: o.sel }"><Icon :n="o.ic" /></span>
              <span class="nm">{{ o.t }}</span>
              <span v-for="x in o.x || []" :key="x[0]" class="oi" :class="x[1]"><Icon :n="x[0]" /></span>
              <span class="vis"><button v-for="v in o.v" :key="v" :aria-label="v"><Icon :n="v" /></button></span>
            </li>
            <li class="lines"><svg><path d="M30 20V270H45M50 50V130M50 210V230M52 50H62M52 70H62M52 90H62M52 110H62M52 130H62M52 210H62M52 230H62" stroke="#7d7d7d" fill="none" /></svg></li>
          </ul>
        </section>

        <section class="area props">
          <div class="hdr">
            <button class="ibtn drop solo" aria-label="Editor type"><Icon n="editor" /></button>
            <span class="crumb"><Icon n="scene" />Scene</span>
            <button class="bare push" aria-label="Pin"><Icon n="pin" /></button>
          </div>
          <div class="body">
            <nav class="ptabs"><div v-for="(g, i) in propTabs" :key="i"><button v-for="t in g" :key="t[0]" :class="t[1]" :aria-label="t[0]"><Icon :n="t[0]" /></button></div></nav>
            <div class="pcontent">
              <label class="prow first"><span>Render Engine</span><span class="dd"><select><option>Cycles</option></select></span></label>
              <h2 class="ph open">Color Management<i class="grip"></i></h2>
              <div class="pbody cm">
                <label class="prow sp"><span>Display Device</span><span class="dd"><select><option>sRGB</option></select></span></label>
                <label class="prow"><span>View Transform</span><span class="dd"><select><option>Standard</option></select></span></label>
                <label class="prow"><span>Look</span><span class="dd"><select><option>None</option></select></span></label>
                <label class="prow"><span>Exposure</span><input class="sl" value="0.000" :style="{ '--v': '49%' }" /></label>
                <label class="prow sp"><span>Gamma</span><input class="sl" value="1.000" :style="{ '--v': '18%' }" /></label>
                <label class="prow"><span>Sequencer</span><span class="dd"><select><option>sRGB</option></select></span></label>
                <div class="sub"><i class="arr"></i><label class="check"><input type="checkbox" />Use Curves</label></div>
              </div>
              <h2 class="ph"><label class="check"><input type="checkbox" />Freestyle</label><i class="grip"></i></h2>
            </div>
          </div>
        </section>
      </div>
    </main>

    <footer class="status">
      <span class="s1"><Icon n="mouseL" />Select</span><span class="s2"><Icon n="mouseD" />Box Select</span><span class="s3"><Icon n="mouseM" />Rotate View</span><span class="s4"><Icon n="mouseR" />Object Context Menu</span>
      <span class="stats">Scene Collection | cement1 | Verts:24 | Faces:18 | Tris:36 | Objects:1/6 | Mem: 121.8 MB | v2.80.75</span>
    </footer>
  </div>
</template>

<style>
body { margin: 0; background: #212121; }
</style>

<style scoped>
.app, .app button, .app input, .app select { font: 11px/18px "DejaVu Sans Condensed", "DejaVu Sans", sans-serif; color: #dedede; }
.app { display: flex; flex-direction: column; min-height: 100vh; background: #212121; cursor: default; }
.app * { box-sizing: border-box; }
button, input, select { border: 0; margin: 0; padding: 0; background: none; min-width: 0; border-radius: 0; outline: 0; }
h2, h3, h4, p, ul { margin: 0; padding: 0; font-weight: normal; list-style: none; }
.ic { width: 16px; height: 16px; flex: none; display: block; }
.dim { opacity: .6; }
.push { margin-left: auto; }

.topbar { height: 28px; display: flex; align-items: center; padding: 0 7px 2px 9px; background: #232323; }
.logo { width: 18px; color: #ddd; }
.menus { display: flex; gap: 15px; margin-left: 9px; flex: none; }
.spaces { display: flex; gap: 2px; margin: 0 auto 0 26px; align-self: flex-end; }
.spaces button { height: 20px; padding: 2px 9px 0; background: #2b2b2b; color: #999; border-radius: 3px 3px 0 0; white-space: nowrap; }
.spaces .on { background: #424242; color: #fff; }
.app .spaces .plus { padding: 0 4px; font-size: 14px; }
.idblock { display: flex; height: 19px; width: 192px; margin-left: 5px; border-radius: 3px; overflow: hidden; outline: 1px solid #3a3a3a; outline-offset: -1px; }
.idblock input { flex: 1; width: 0; background: #1d1d1d; padding-left: 7px; border: 1px solid #3a3a3a; border-width: 1px 0; }
.ibtn { display: flex; align-items: center; height: 19px; width: 31px; padding-left: 4px; background: #2a2a2a; flex: none; }
.solo, .grp { border-radius: 3px; }
.solo { box-shadow: inset 0 0 0 1px #3d3d3d; }
.drop { position: relative; }
.drop::after, .dd::after, .chev::after { content: ""; position: absolute; right: 6px; top: 6px; width: 4px; height: 4px; border: solid #b5b5b5; border-width: 0 1px 1px 0; transform: rotate(45deg); pointer-events: none; }
.ibtn.drop::after { right: 4px; }
.sq { width: 19px; height: 19px; display: flex; align-items: center; justify-content: center; background: #545454; flex: none; }
.sq.dark { background: #2a2a2a; }
.sq.faint { background: #4a4a4a; border-radius: 3px; }
.sq.blue { background: #4c74b8; color: #fff; }
.sq.navy { background: #3c5a8c; }
.app .sq.rgb { font-size: 15px; color: #ccc; }
.grp { display: flex; overflow: hidden; flex: none; background: #2a2a2a; }
.chev { width: 19px; height: 19px; position: relative; }
.bare { width: 18px; display: flex; justify-content: center; color: #888; }

.main { flex: 1; display: flex; gap: 3px; padding: 0 1px; min-height: 900px; }
.left { flex: 1584 0 0; min-width: 0; display: flex; flex-direction: column; gap: 3px; }
.right { flex: 331 0 0; min-width: 0; display: flex; flex-direction: column; gap: 3px; }
.upper { flex: 767 0 0; display: flex; gap: 3px; min-height: 0; }
.timeline { flex: 197 0 0; }
.view3d { flex: 946 0 0; }
.mid { flex: 635 0 0; min-width: 0; display: flex; flex-direction: column; gap: 3px; }
.comp { flex: 420 0 0; }
.shader { flex: 344 0 0; }
.outl { flex: 310 0 0; }
.props { flex: 654 0 0; }
.area { display: flex; flex-direction: column; min-width: 0; min-height: 0; border-radius: 5px; overflow: hidden; position: relative; background: #393939; }
.hdr { height: 25px; flex: none; display: flex; align-items: center; padding: 0 8px; background: #393939; }
.body { flex: 1; display: flex; min-height: 0; }
.canvas { flex: 1; position: relative; overflow: hidden; min-width: 0; }
.fill { position: absolute; inset: 0; width: 100%; height: 100%; }

.dd { position: relative; display: flex; align-items: center; height: 20px; background: #2a2a2a; border: 1px solid #3d3d3d; border-radius: 3px; flex: none; }
.dd select { appearance: none; flex: 1; width: 0; padding-left: 7px; height: 18px; }
.dd .ic + select { padding-left: 4px; }
.mode { width: 109px; margin-left: 7px; padding-left: 3px; }
.mode::after, .local::after { right: 4px; }
.mbtns { display: flex; gap: 2px; margin: 0 20px 0 6px; }
.mbtns button { padding: 0 7px; height: 20px; background: #303030; border-radius: 2px; }
.local { width: 78px; margin-right: 6px; padding-left: 4px; }
.view3d .grp { margin-left: 7px; }
.view3d .push { margin-left: auto; }

.viewinfo { position: absolute; left: 74px; top: 6px; line-height: 20px; color: #fff; text-shadow: 1px 1px 2px #000; }
.toolbar { position: absolute; left: 8px; top: 9px; display: flex; flex-direction: column; gap: 7px; }
.tgroup { display: flex; flex-direction: column; border-radius: 4px; overflow: hidden; }
.tgroup button { width: 38px; height: 34px; background: #2e2e2e; display: flex; align-items: center; justify-content: center; color: #eee; position: relative; }
.tgroup button + button { border-top: 1px solid #3a3a3a; }
.tgroup .ic { width: 24px; height: 24px; }
.tgroup .on { background: #5680c2; }
.tgroup .more::after { content: ""; position: absolute; right: 2px; bottom: 2px; border: 2px solid; border-color: transparent #999 #999 transparent; }
.navs { position: absolute; right: 257px; top: 9px; display: flex; gap: 3px; }
.navs button { width: 28px; height: 28px; border-radius: 14px; background: #292929; display: flex; align-items: center; justify-content: center; color: #c4c4c4; }
.axes { position: absolute; right: 179px; top: 9px; width: 84px; height: 80px; }
.axes text { font-size: 11px; text-anchor: middle; fill: #000; }
.npanel { position: absolute; right: 0; top: 0; width: 172px; height: 388px; background: rgba(48, 48, 48, .95); }
.ph { height: 25px; display: flex; align-items: center; padding: 0 8px 0 22px; font-size: 12px; background: #424242; position: relative; color: #e6e6e6; }
.ph::before, .arr { content: ""; box-sizing: border-box; border: 4px solid transparent; border-left: 6px solid #b4b4b4; border-right: 0; width: 6px; height: 8px; flex: none; }
.ph::before { position: absolute; left: 9px; top: 8px; }
.ph.open::before, .arr.open { border: 4px solid transparent; border-top: 6px solid #b4b4b4; border-bottom: 0; width: 8px; height: 6px; }
.grip { margin-left: auto; width: 11px; height: 5px; background: radial-gradient(circle, #9a9a9a 0 1px, transparent 1px) 0 0 / 3px 3px; }
.tg { padding: 8px 8px 0 9px; }
.tg h3 { padding-left: 7px; line-height: 18px; margin-bottom: 2px; font-size: 11px; }
.tg + .tg { padding-top: 5px; }
.tgrow { display: flex; }
.nums { flex: 1; display: flex; flex-direction: column; border-radius: 3px; overflow: hidden; }
.nums label { display: flex; height: 19px; background: #585858; padding: 0 13px 0 15px; }
.nums label + label { border-top: 1px solid #404040; }
.app .nums input { flex: 1; width: 0; text-align: right; font-family: "DejaVu Sans", sans-serif; }
.locks { width: 38px; display: flex; flex-direction: column; }
.locks button { height: 19px; padding-left: 16px; color: #999; }
.euler { margin-top: 2px; }
.vtabs { width: 20px; flex: none; background: #222; padding: 7px 3px 0 0; display: flex; flex-direction: column; gap: 6px; }
.vtabs button { writing-mode: vertical-rl; transform: rotate(180deg); height: auto; width: 17px; padding: 4px 0; line-height: 17px; background: #2b2b2b; border-radius: 3px 0 0 3px; border-left: 1px solid #3a3a3a; font-family: "DejaVu Sans", sans-serif; }
.vtabs .on { background: #454545; }

.plain { display: flex; gap: 15px; flex: none; }
.comp .plain { margin-left: 13px; }
.check { display: flex; align-items: center; white-space: nowrap; }
.check input { appearance: none; width: 13px; height: 13px; border-radius: 3px; background: #656565; margin-right: 9px; position: relative; flex: none; }
.check input:checked { background: #5680c2; }
.check input:checked::after { content: ""; position: absolute; left: 4px; top: 1px; width: 3px; height: 7px; border: solid #fff; border-width: 0 2px 2px 0; transform: rotate(40deg); }
.comp .hdr .check, .shader .hdr .check { margin-left: 17px; color: #fff; }
.comp .hdr .faint { margin: 0 7px; }
.txt { width: 80px; height: 19px; background: #545454; }
.end { margin-left: 7px; }
.shader .hdr { padding-left: 0; }
.shader .plain { margin-left: -4px; }
.slot { width: 79px; margin-left: 25px; }
.shader .idblock { width: 233px; margin: 0 6px; }
.shader .sq.two { width: 24px; margin-right: 1px; }
.shader .last { margin-left: auto; margin-right: -1px; }
.nodes { background: #232323; }
.expand { position: absolute; left: 1px; top: 13px; color: #aaa; font-size: 14px; }
.treename { position: absolute; left: 29px; bottom: 23px; color: #fff; }
.side { width: 159px; flex: none; background: #434343; }
.side .ph { padding-left: 22px; background: #444; }
.pbody { background: #393939; }
.atool { height: 46px; padding: 8px 18px; display: flex; gap: 10px; }
.atool .ic { width: 18px; height: 20px; }

.node { position: absolute; background: rgba(72, 72, 72, .95); border-radius: 4px; box-shadow: 0 2px 6px rgba(0, 0, 0, .7); font-size: 9px; }
.app .node input, .app .node select { font-size: 9px; }
.node h4 { display: flex; align-items: center; justify-content: space-between; height: 17px; background: #a03144; border-radius: 3px 3px 0 0; padding: 0 6px 0 17px; position: relative; line-height: 16px; }
.node h4::before { content: ""; position: absolute; left: 8px; border: 3px solid transparent; border-top: 5px solid #ddd; border-bottom: 0; }
.node h4 .ic { width: 12px; height: 12px; }
.rr { left: 101px; top: 131px; width: 110px; height: 243px; border: 1px solid #fff; display: flex; flex-direction: column; }
.cp { left: 287px; top: 138px; width: 110px; height: 93px; }
.cp h4 { background: #7e2736; margin-bottom: 1px; }
.sock { text-align: right; padding-right: 15px; height: 17px; line-height: 21px; position: relative; }
.sock::after, .nval::before { content: ""; position: absolute; right: -4px; top: 8px; width: 6px; height: 6px; border-radius: 3px; background: #a0a0a0; box-shadow: 0 0 0 1px #111; }
.sock.in { text-align: left; padding: 0 0 0 14px; line-height: 17px; }
.sock.in::after { left: -3px; right: auto; top: 5px; }
.sock.yl::after { background: #c7c729; }
.nimg { margin: auto 8px 0 10px; height: 13px; display: flex; align-items: center; gap: 1px; }
.nimg .ic { width: 11px; height: 11px; background: #5a5a5a; flex: 1; }
.nimg input { width: 22px; background: #1f1f1f; height: 12px; margin-left: 6px; padding-left: 2px; }
.rr .dd { height: 14px; }
.rr .dd::after { top: 3px; width: 3px; height: 3px; }
.rr .dd select { height: 12px; line-height: 12px; padding-left: 4px; }
.nsel { margin: 6px 8px 6px; }
.nline { display: flex; align-items: center; justify-content: space-between; padding: 0 8px 0 12px; margin-bottom: 8px; height: 14px; }
.nline .dd { width: 43px; }
.cp .check { margin-left: 10px; height: 18px; }
.cp .check input { width: 10px; height: 10px; margin-right: 6px; border-radius: 2px; }
.cp .check input:checked::after { left: 3px; height: 5px; }
.cp .check + .sock { height: 22px; line-height: 22px; }
.cp .sock.in::after { top: 8px; }
.nval { display: flex; position: relative; margin: 0 9px 2px; height: 14px; line-height: 14px; background: #585858; border-radius: 2px; padding: 0 11px; }
.nval::before { left: -12px; right: auto; top: 4px; }
.nval input { flex: 1; width: 0; text-align: right; height: 14px; }

.tiny, .pill { position: absolute; font-size: 4px; line-height: 8px; background: rgba(72, 72, 72, .9); box-shadow: 0 1px 4px #000; overflow: hidden; }
.app .tiny input, .app .tiny select, .app .tiny button { font-size: 4px; line-height: 6px; }
.tiny.sel { outline: 1px solid #fff; }
.tiny h4 { height: 7px; line-height: 7px; padding-left: 4px; margin-bottom: 1px; font-size: 4px; white-space: nowrap; color: #fff; }
.tiny.short h4 { margin-bottom: 2px; }
.tex { background: #a35a2d; }
.mix { background: #8a7f2b; }
.conv { background: #3f84ad; }
.vec { background: #6a52a8; }
.out { text-align: right; padding-right: 5px; height: 8px; }
.out.gap { margin-bottom: 2px; }
.inp { height: 9px; padding-left: 6px; line-height: 9px; }
.tsel, .timg, .tcb, .tval { display: flex; align-items: center; height: 9px; margin: 0 4px 0 5px; }
.tsel span { flex: 1; }
.tsel select { appearance: none; flex: 1; height: 6px; background: linear-gradient(#999, #999) right 2px center / 2px 1px no-repeat #2a2a2a; padding-left: 1px; border-radius: 1px; }
.timg { gap: 1px; }
.timg .ic { width: 6px; height: 6px; color: #fff; background: #777; }
.timg input { flex: 1; width: 0; height: 6px; background: #222; padding-left: 2px; }
.timg b { font-weight: normal; background: #555; width: 6px; text-align: center; }
.tcb input { appearance: none; width: 3px; height: 3px; background: #666; margin-right: 3px; }
.tval { height: 7px; margin-top: 1px; background: #585858; border-radius: 1px; padding: 0 3px; }
.tval.fac { background: #4f8443; height: 6px; margin-bottom: 1px; }
.tval input { flex: 1; width: 0; text-align: right; height: 6px; }
.short .tsel, .short .tcb, .short .inp { height: 8px; line-height: 8px; }
.mapn { height: 100px; }
.mapn h4 { margin-bottom: 1px; }
.seg { display: flex; gap: 1px; justify-content: flex-end; padding: 2px 4px 0 0; height: 8px; margin-bottom: 2px; }
.seg button { width: 18px; height: 5px; background: #5a5a5a; border-radius: 2px; }
.seg .on { background: #5680c2; width: 14px; }
.lab, .pair { display: flex; justify-content: flex-end; gap: 5px; padding-right: 4px; height: 7px; line-height: 6px; }
.lab { height: 9px; line-height: 9px; }
.lab span, .pair span { width: 23px; flex: none; height: 6px; }
.pair span { background: #585858; text-align: center; border-radius: 1px; }
.mapn .tcb { padding-left: 18px; justify-content: flex-end; margin-right: 22px; height: 12px; }
.off.pair span { opacity: .5; }
.off.pair span:last-child { width: 36px; }
.pill { height: 11px; border-radius: 4px; line-height: 11px; padding: 0 4px; color: #fff; white-space: nowrap; border: 1px solid #0006; }
.pill.tex { background: #a35a2de6; }
.pill.mix { background: #8a7f2b; }
.pill.conv { background: #3f84ad; }
.pill i { position: absolute; right: 2px; top: 3px; width: 5px; height: 4px; background: repeating-linear-gradient(90deg, #fff8 0 1px, transparent 1px 2px); }

.nprops { height: 84px; padding: 8px 8px 0 16px; }
.nprops > label { display: flex; align-items: center; justify-content: space-between; height: 19px; margin-bottom: 6px; white-space: nowrap; }
.tf { width: 102px; height: 19px; background: #1d1d1d; border: 1px solid #444; border-radius: 3px; display: flex; align-items: center; padding-left: 3px; flex: none; }
.tf input { flex: 1; width: 0; padding-left: 6px; }
.sub { display: flex; align-items: center; }
.sub .arr { margin-right: 9px; }
.nprops .sub { padding: 5px 24px 0 7px; }
.nprops .sub .check input { margin-right: 6px; }
.nprops .sub .bare { margin-left: auto; color: #bbb; }

.timeline .hdr { padding-right: 18px; }
.tmenus { margin: 0 11px 0 7px; }
.tmenus button { height: 19px; padding: 0 16px 0 7px; }
.tmenus .drop::after { right: 4px; }
.tmenus button + button { border-left: 1px solid #444; }
.transport { display: flex; gap: 7px; margin: 0 auto 0 455px; }
.transport .grp, .range { gap: 1px; }
.cur { width: 74px; height: 19px; background: #545454; border-radius: 3px; text-align: center; }
.range { margin-left: 6px; background: #444; }
.range label { width: 88px; background: #545454; display: flex; padding: 0 14px; }
.range label + label { width: 83px; padding: 0 12px; }
.range input { flex: 1; width: 0; text-align: right; }
.app .cur, .app .range input { font-family: "DejaVu Sans", sans-serif; }
.ruler { height: 23px; background: #292929; padding: 0 30px 0 22px; }
.scale { height: 23px; padding-top: 1px; display: flex; align-items: center; position: relative; }
.scale span { flex: 1 0 0; width: 0; display: flex; justify-content: center; font-family: "DejaVu Sans", sans-serif; color: #a8a8a8; }
.now { position: absolute; top: 3px; width: 32px; height: 19px; border-radius: 5px; background: #5680c2; color: #fff; text-align: center; font-weight: normal; font-family: "DejaVu Sans", sans-serif; margin-left: -16px; }
.track { flex: 1; position: relative; background: #333; }
.track .fill { left: 22px; width: calc(100% - 52px); overflow: visible; }
.scroll { height: 8px; margin: 0 10px 2px 9px; border-radius: 4px; background: #666; }
.timeline { background: #333; }
.timeline .expand { top: 37px; left: 0; }
.timeline .expand.r { left: auto; right: 1px; }

.outl .hdr { gap: 5px; padding: 0 5px 0 9px; }
.search { width: 110px; height: 19px; background: #1d1d1d; border-radius: 3px; display: flex; align-items: center; padding-left: 3px; margin: 0 auto 0 19px; }
.search input { flex: 1; width: 0; }
.outl .solo { width: 31px; }
.outl { background: #2a2a2a; }
.tree { position: relative; padding-top: 2px; }
.tree li { height: 20px; display: flex; align-items: center; padding-right: 10px; color: #c8c8c8; }
.tree li:nth-child(odd) { background: #2c2c2c; }
.tree li:nth-child(even) { background: #272727; }
.tree .root { padding-left: 21px; gap: 3px; }
.hl { background: #424242; border-radius: 3px; width: 20px; height: 18px; display: grid; place-items: center; }
.tree .d1 { padding-left: 26px; }
.tree .d2 { padding-left: 47px; }
.tree .arr { margin-right: 11px; position: relative; z-index: 1; }
.tree .d2 .arr { margin-right: 7px; }
.tree .arr.open { margin-right: 9px; }
.tree .arr.none { border: 0; margin-right: 11px; }
.ocb { appearance: none; width: 11px; height: 11px; border: 1px solid #999; margin-right: 7px; position: relative; }
.ocb:checked { background: #ddd; border-color: #ddd; }
.ocb:checked::after { content: ""; position: absolute; left: 3px; top: 0; width: 3px; height: 6px; border: solid #222; border-width: 0 2px 2px 0; transform: rotate(40deg); }
.oi { width: 20px; height: 18px; display: grid; place-items: center; border-radius: 4px; flex: none; }
.d1 .org { margin-left: -3px; }
.nm { margin: 0 20px 0 4px; }
.org { color: #c47e45; }
.oi.blue { color: #6d9bea; }
.green { color: #72dd7c; }
.lit { background: #5a5f68; }
.green.lit { background: #555; }
.tree .off { color: #6f6f6f; }
.off .oi { opacity: .75; }
.d2.off .oi { opacity: .6; }
.vis { margin-left: auto; display: flex; gap: 3px; }
.vis button { color: #ddd; }
.tree li.sel { background: #2e4c78; }
.sel .nm { color: #f0a030; }
.tree li.lines { position: absolute; inset: 2px 0 0; height: auto; background: none; padding: 0; pointer-events: none; }
.lines svg { width: 100%; height: 100%; align-self: stretch; }

.crumb { display: flex; align-items: center; gap: 8px; margin-left: 14px; }
.ptabs { width: 28px; flex: none; background: #212121; padding: 9px 0 0 2px; display: flex; flex-direction: column; gap: 10px; }
.ptabs > div { display: flex; flex-direction: column; gap: 2px; }
.ptabs button { height: 26px; background: #2b2b2b; border-radius: 3px 0 0 3px; padding-left: 5px; color: #ccc; }
.ptabs .on { background: #424242; color: #fff; }
.app .ptabs .red { color: #d65454; }
.app .ptabs .orange { color: #c8824a; }
.app .ptabs .pblue { color: #6d96d8; }
.app .ptabs .green { color: #6ec877; }
.pcontent { flex: 1; background: #434343; min-width: 0; }
.prow { display: flex; align-items: center; gap: 10px; height: 20px; margin-bottom: 2px; padding-right: 8px; }
.prow > span:first-child { flex: 1; text-align: right; white-space: nowrap; }
.prow .dd, .prow .sl { width: 48%; height: 19px; }
.first { margin: 8px 0; }
.sp { margin-bottom: 10px; }
.app .sl { text-align: center; border-radius: 3px; background: linear-gradient(90deg, #5680c2 var(--v), #585858 var(--v)); font-family: "DejaVu Sans", sans-serif; }
.cm { height: 185px; padding-top: 8px; }
.cm .sub { padding: 9px 0 0 23px; }
.cm .sub .arr { margin-right: 9px; }
.cm .check input { margin-right: 6px; }
.props .ph .check { margin-left: 2px; }
.props .ph .check input { margin-right: 6px; }

.status { height: 22px; display: flex; align-items: center; padding: 2px 31px 0 10px; background: #2c2c2c; border-top: 1px solid #222; color: #a6a6a6; white-space: nowrap; }
.status > span { display: flex; align-items: center; gap: 8px; }
.s1 { width: 66px; }
.s2 { width: 170px; }
.s3 { width: 236px; }
.status > .stats { margin-left: auto; }
</style>
